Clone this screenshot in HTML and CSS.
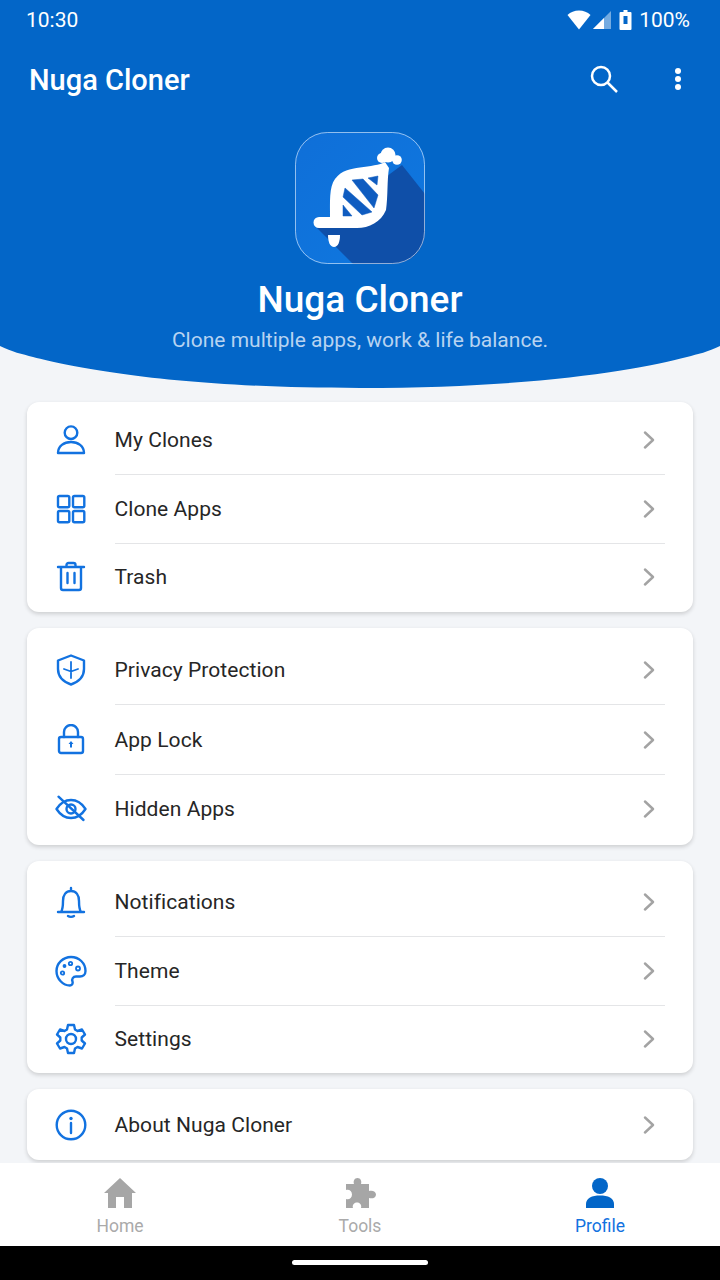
FILE: index.html
```html
<!DOCTYPE html>
<html lang="en">
<head>
<meta charset="utf-8">
<title>Nuga Cloner</title>
<link rel="stylesheet" href="styles.css">
</head>
<body>
<div class="app">
  <header class="hero">
    <div class="status">
      <span>10:30</span>
      <div class="status-right">
        <svg class="s-wifi" viewBox="0 0 24 20"><path d="M12 19.500 .5 5C3.500 2 7.500 .5 12 .5S20.500 2 23.500 5Z"/></svg>
        <svg class="s-signal" viewBox="0 0 18 18"><path d="M0 18 18 0V18Z" opacity=".45"/><path d="M0 18 11 7V18Z"/></svg>
        <svg class="s-batt" viewBox="0 0 12 20"><path fill-rule="evenodd" d="M4 0H8V2H11A1 1 0 0 1 12 3V19A1 1 0 0 1 11 20H1A1 1 0 0 1 0 19V3A1 1 0 0 1 1 2H4ZM4 6V14H8V6Z"/></svg>
        <span>100%</span>
      </div>
    </div>
    <div class="toolbar">
      <h1 class="toolbar-title">Nuga Cloner</h1>
      <div class="toolbar-actions">
        <svg class="t-search" viewBox="0 0 28 28"><circle cx="11" cy="11" r="9"/><path d="M17.500 17.500 27 27"/></svg>
        <svg class="t-more" viewBox="0 0 8 22"><circle cx="4" cy="3" r="3"/><circle cx="4" cy="11" r="3"/><circle cx="4" cy="19" r="3"/></svg>
      </div>
    </div>
    <svg class="logo" viewBox="0 0 130 132">
      <defs>
        <clipPath id="round"><rect width="130" height="132" rx="32"/></clipPath>
        <linearGradient id="lg" x1="0" y1="0" x2="1" y2="1"><stop offset="0" stop-color="#0f6fd8"/><stop offset="1" stop-color="#0f78e0"/></linearGradient>
      </defs>
      <g clip-path="url(#round)">
        <rect width="130" height="132" fill="url(#lg)"/>
        <path d="M22 96 58 132H130V62L107 33Z" fill="#0f4fa8"/>
      </g>
      <rect x=".5" y=".5" width="129" height="131" rx="32" fill="none" stroke="#fff" stroke-opacity=".55"/>
      <path fill="#fff" d="M24 85H35C35 70 34 55 40 47 47 38 55 37 65 35.500 75 34 85 33 90 30L94 36C92 48 93 65 91 78 86 90 74 96 62 96H24A5.500 5.500 0 0 1 24 85Z"/>
      <circle cx="93" cy="23" r="7.500" fill="#fff"/>
      <circle cx="102" cy="28" r="4.800" fill="#fff"/>
      <circle cx="87" cy="26" r="5" fill="#fff"/>
      <path fill="#fff" d="M33 103H45C45 110 43 115 39 115 35 115 33 110 33 103Z"/>
      <g class="dna-gaps">
        <path d="M73 46 83 44 82 53Z"/>
        <path d="M57 48 68 47 83 63 79 76Z"/>
        <path d="M50 56 77 80 67 83 48 65Z"/>
        <path d="M48 73 57 84H48Z"/>
      </g>
    </svg>
    <h2 class="hero-title">Nuga Cloner</h2>
    <p class="hero-sub">Clone multiple apps, work &amp; life balance.</p>
  </header>

  <main class="content">
    <section class="card card-a">
      <a class="row">
        <svg class="ic" viewBox="0 0 32 32"><circle cx="16" cy="8.700" r="6.300"/><path d="M3 29C3 22 9 18 16 18S29 22 29 29Z"/></svg>
        <span class="label">My Clones</span>
        <svg class="chev" viewBox="0 0 12 18"><path d="M2 1.500 10 9 2 16.500"/></svg>
      </a>
      <a class="row">
        <svg class="ic" viewBox="0 0 32 32"><rect x="3" y="3" width="11.300" height="11.300" rx="1.500"/><rect x="18" y="3" width="11.300" height="11.300" rx="1.500"/><rect x="3" y="18" width="11.300" height="11.300" rx="1.500"/><rect x="18" y="18" width="11.300" height="11.300" rx="1.500"/></svg>
        <span class="label">Clone Apps</span>
        <svg class="chev" viewBox="0 0 12 18"><path d="M2 1.500 10 9 2 16.500"/></svg>
      </a>
      <a class="row">
        <svg class="ic" viewBox="0 0 32 32"><path d="M3 6H29M11.500 6V4A2 2 0 0 1 13.500 2H18.500A2 2 0 0 1 20.500 4V6M6 6V27A2 2 0 0 0 8 29H24A2 2 0 0 0 26 27V6M12.500 12V22M19.500 12V22"/></svg>
        <span class="label">Trash</span>
        <svg class="chev" viewBox="0 0 12 18"><path d="M2 1.500 10 9 2 16.500"/></svg>
      </a>
    </section>

    <section class="card card-b">
      <a class="row">
        <svg class="ic" viewBox="0 0 32 32"><path d="M16 1.500 29 6.500V15C29 23 23 28 16 30.500 9 28 3 23 3 15V6.500Z"/><path class="thin" d="M16 8V24M9 15 16 17.500 23 15"/></svg>
        <span class="label">Privacy Protection</span>
        <svg class="chev" viewBox="0 0 12 18"><path d="M2 1.500 10 9 2 16.500"/></svg>
      </a>
      <a class="row">
        <svg class="ic" viewBox="0 0 32 32"><rect x="4" y="13" width="24" height="16" rx="2"/><path d="M9 13V8A7 7 0 0 1 23 8V13"/><path class="solid" d="M16 17 18.500 20H17V23.500H15V20H13.500Z"/></svg>
        <span class="label">App Lock</span>
        <svg class="chev" viewBox="0 0 12 18"><path d="M2 1.500 10 9 2 16.500"/></svg>
      </a>
      <a class="row">
        <svg class="ic" viewBox="0 0 32 32"><path d="M1.500 16C6 9 11 7 16 7S26 9 30.500 16C26 23 21 25 16 25S6 23 1.500 16Z"/><circle cx="16" cy="16" r="4.500"/><path d="M3.500 3.700 28.500 27"/></svg>
        <span class="label">Hidden Apps</span>
        <svg class="chev" viewBox="0 0 12 18"><path d="M2 1.500 10 9 2 16.500"/></svg>
      </a>
    </section>

    <section class="card card-c">
      <a class="row">
        <svg class="ic" viewBox="0 0 32 32"><path d="M3 26H29M6 26C8 23 8 20 8 15 8 9 11 5 16 5S24 9 24 15C24 20 24 23 26 26M16 5V2M13 30C14.500 31 17.500 31 19 30"/></svg>
        <span class="label">Notifications</span>
        <svg class="chev" viewBox="0 0 12 18"><path d="M2 1.500 10 9 2 16.500"/></svg>
      </a>
      <a class="row">
        <svg class="ic" viewBox="0 0 32 32"><path d="M16 2C8 2 1.500 8.500 1.500 16 1.500 24 8 30.500 15 30.500 17.500 30.500 18 28 17.500 26.500 16.500 24 18 21.500 21 21.500H25C28 21.500 30.500 19.500 30.500 16 30.500 8 24 2 16 2Z"/><circle class="thin" cx="23" cy="13.500" r="2"/><circle class="thin" cx="15.500" cy="8.500" r="1.700"/><circle class="thin" cx="9.500" cy="11" r="1"/><circle class="thin" cx="7.500" cy="18" r="1.700"/></svg>
        <span class="label">Theme</span>
        <svg class="chev" viewBox="0 0 12 18"><path d="M2 1.500 10 9 2 16.500"/></svg>
      </a>
      <a class="row">
        <svg class="ic" viewBox="0 0 32 32"><path d="M13 2H19L20 6.500 22.500 8 27 6.500 30 11.500 26.700 14.500V17.500L30 20.500 27 25.500 22.500 24 20 25.500 19 30H13L12 25.500 9.500 24 5 25.500 2 20.500 5.300 17.500V14.500L2 11.500 5 6.500 9.500 8 12 6.500Z"/><circle cx="16" cy="16" r="5"/></svg>
        <span class="label">Settings</span>
        <svg class="chev" viewBox="0 0 12 18"><path d="M2 1.500 10 9 2 16.500"/></svg>
      </a>
    </section>

    <section class="card card-d">
      <a class="row">
        <svg class="ic" viewBox="0 0 32 32"><circle cx="16" cy="16" r="14.300"/><path d="M16 14V24"/><circle class="solid" cx="16" cy="9.500" r="1.700"/></svg>
        <span class="label">About Nuga Cloner</span>
        <svg class="chev" viewBox="0 0 12 18"><path d="M2 1.500 10 9 2 16.500"/></svg>
      </a>
    </section>
  </main>

  <nav class="tabs">
    <a class="tab">
      <svg class="tab-ic" viewBox="0 0 32 30"><path d="M16 0 32 15H28V30H20V19H12V30H4V15H0Z"/></svg>
      <span>Home</span>
    </a>
    <a class="tab">
      <svg class="tab-ic" viewBox="0 0 32 30"><path d="M2 6H10C9 3 10.500 0 13.500 0S18 3 17 6H25V13C28 12 32 13 32 16.500S28 21 25 20V30H17C18 27 16 24.500 13 24.500S8 27 9 30H2V21C5 22 8 20 8 16.500S5 11 2 12Z"/></svg>
      <span>Tools</span>
    </a>
    <a class="tab tab-on">
      <svg class="tab-ic" viewBox="0 0 32 30"><ellipse cx="16" cy="8" rx="8" ry="8"/><path d="M2 30V26C2 20 8 17.500 16 17.500S30 20 30 26V30Z"/></svg>
      <span>Profile</span>
    </a>
  </nav>
  <div class="sysbar"><span class="pill"></span></div>
</div>
</body>
</html>
```

FILE: styles.css
```css
* { box-sizing: border-box; }
html, body { margin: 0; padding: 0; }
body { font-family: Roboto, "Noto Sans", sans-serif; background: #f3f5f8; }

.app { width: 720px; height: 1280px; display: flex; flex-direction: column; overflow: hidden; background: #f3f5f8; }

.hero {
  height: 388px; flex: none; background: #0366c8; color: #fff;
  clip-path: path("M0 0H720V346C708 352 698 354 687 357C640 369 540 388 360 388C180 388 80 369 33 357C22 354 12 352 0 346Z");
  display: flex; flex-direction: column; align-items: center;
}
.status {
  align-self: stretch; height: 40px; padding: 0 30px 0 26px;
  display: flex; align-items: center; justify-content: space-between;
  font-size: 21px; line-height: 40px;
}
.status-right { display: flex; align-items: center; }
.status-right svg { fill: #fff; display: block; }
.s-wifi { width: 24px; height: 20px; margin-right: 2px; }
.s-signal { width: 18px; height: 18px; margin-right: 8px; }
.s-batt { width: 13px; height: 20px; margin-right: 7px; }

.toolbar {
  align-self: stretch; height: 80px; padding: 0 38px 0 29px;
  display: flex; align-items: center; justify-content: space-between;
}
.toolbar-title { margin: 0; font-size: 29px; font-weight: 500; }
.toolbar-actions { display: flex; align-items: center; gap: 56px; margin-top: -2px; }
.t-search { width: 28px; height: 28px; fill: none; stroke: #fff; stroke-width: 2.500; display: block; }
.t-more { width: 8px; height: 22px; fill: #fff; display: block; }

.logo { width: 130px; height: 132px; flex: none; margin-top: 12px; display: block; }
.dna-gaps { fill: #0f5cc0; stroke: #0f5cc0; stroke-width: .5; stroke-linejoin: round; }
.hero-title { margin: 13px 0 0; font-size: 37px; line-height: 46px; font-weight: 500; }
.hero-sub { margin: 2px 0 0; font-size: 21px; line-height: 30px; letter-spacing: .01px; color: #b7d3f1; }

.content { flex: 1; min-height: 0; overflow: hidden; padding: 14px 27px 0; display: flex; flex-direction: column; gap: 16px; }
.card { background: #fff; border-radius: 12px; box-shadow: 0 2px 4px rgba(0, 0, 0, .16); flex: none; }
.card-a { padding-top: 4px; height: 210px; }
.card-b { padding-top: 7.400px; height: 217px; }
.card-c { padding-top: 7px; height: 212px; }
.card-d { padding-top: 2px; height: 71px; }
.card-a .row, .card-c .row, .card-d .row { height: 68.500px; }
.card-b .row { height: 69.500px; }

.row { display: flex; align-items: center; position: relative; padding-left: 28px; padding-right: 28px; }
.row + .row::before { content: ""; position: absolute; left: 88px; right: 28px; top: -.5px; height: 1px; background: #e4e5e7; }
.ic { width: 32px; height: 32px; flex: none; fill: none; stroke: #1272e0; stroke-width: 2.400; stroke-linejoin: round; stroke-linecap: round; display: block; }
.ic .thin { stroke-width: 1.800; }
.ic .solid { fill: #1272e0; stroke: none; }
.label { margin-left: 27.500px; flex: 1; font-size: 21px; letter-spacing: .06px; color: #262626; }
.chev { width: 12px; height: 18px; flex: none; margin-right: 10px; fill: none; stroke: #a3a3a3; stroke-width: 2.400; stroke-linecap: round; stroke-linejoin: round; display: block; }

.tabs { height: 83px; flex: none; background: #fff; display: flex; }
.tab { flex: 1; display: flex; flex-direction: column; align-items: center; padding-top: 15px; color: #aaa; font-size: 17.500px; line-height: 22px; }
.tab-ic { width: 32px; height: 30px; fill: #a6a6a6; display: block; margin-bottom: 7px; }
.tab-on { color: #1272e0; }
.tab-on .tab-ic { fill: #0366c8; }

.sysbar { height: 34px; flex: none; background: #000; display: flex; justify-content: center; padding-top: 14px; }
.pill { width: 136px; height: 5px; border-radius: 3px; background: #fff; }
```
